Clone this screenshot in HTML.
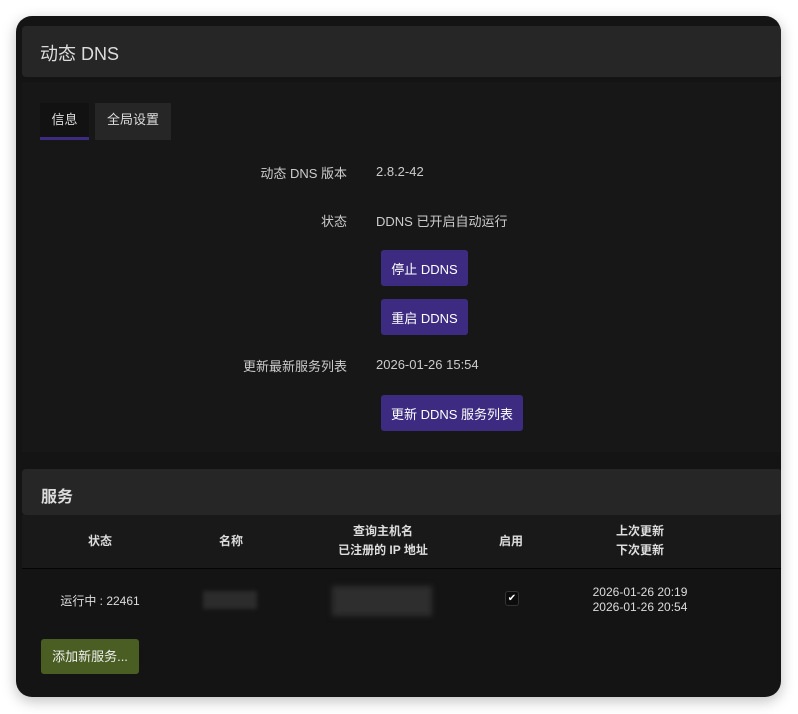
<!DOCTYPE html>
<html><head><meta charset="utf-8"><style>
*{margin:0;padding:0;box-sizing:border-box}
body{width:798px;height:714px;background:#fff;font-family:"Liberation Sans","Noto Sans CJK SC",sans-serif;color:#ddd;position:relative;overflow:hidden}
.win{position:absolute;left:16px;top:16px;width:765px;height:681px;background:#141414;border-radius:16px;overflow:hidden;box-shadow:0 4px 14px rgba(0,0,0,.25)}
.abs{position:absolute}
.hdr{left:6px;top:10px;width:760px;height:51px;background:#262626;border-radius:4px}
.sec{left:6px;top:66px;width:760px;height:370px;background:#171717}
.btn{position:absolute;background:#3d2b82;color:#fff;font-size:13px;border-radius:3px;display:flex;align-items:center;justify-content:center;height:36px}
.lbl{position:absolute;font-size:13px;color:#ccc;text-align:right;width:200px}
.val{position:absolute;font-size:13px;color:#ccc}
.th{position:absolute;font-size:12px;font-weight:bold;color:#ddd;text-align:center;line-height:19px}
.td{position:absolute;font-size:12px;color:#ddd;text-align:center;line-height:15px}
</style></head><body>
<div class="win">
<div class="abs hdr"><div class="abs" style="left:18px;top:14px;font-size:18px;color:#ddd">动态 DNS</div></div>
<div class="abs sec">
<div class="abs" style="left:18px;top:21px;width:49px;height:37px;background:#121212;font-size:13px;text-align:center;line-height:34px">信息<div class="abs" style="left:0;bottom:0;width:49px;height:3px;background:#3d2b82"></div></div>
<div class="abs" style="left:73px;top:21px;width:76px;height:37px;background:#262626;font-size:13px;text-align:center;line-height:34px">全局设置</div>
</div>
<div class="lbl" style="left:131px;top:147px">动态 DNS 版本</div><div class="val" style="left:360px;top:148px">2.8.2-42</div>
<div class="lbl" style="left:131px;top:195px">状态</div><div class="val" style="left:360px;top:195px">DDNS 已开启自动运行</div>
<div class="btn" style="left:365px;top:234px;width:87px">停止 DDNS</div>
<div class="btn" style="left:365px;top:283px;width:87px">重启 DDNS</div>
<div class="lbl" style="left:131px;top:340px">更新最新服务列表</div><div class="val" style="left:360px;top:341px">2026-01-26 15:54</div>
<div class="btn" style="left:365px;top:379px;width:142px">更新 DDNS 服务列表</div>
<div class="abs" style="left:6px;top:453px;width:760px;height:46px;background:#262626;border-radius:4px"><div class="abs" style="left:19px;top:14px;font-size:16px;font-weight:bold">服务</div></div>
<div class="abs" style="left:6px;top:499px;width:760px;height:54px;background:#191919;border-bottom:1px solid #050505"></div>
<div class="th" style="left:44px;top:516px;width:80px">状态</div>
<div class="th" style="left:175px;top:516px;width:80px">名称</div>
<div class="th" style="left:287px;top:506px;width:160px">查询主机名<br>已注册的 IP 地址</div>
<div class="th" style="left:455px;top:516px;width:80px">启用</div>
<div class="th" style="left:564px;top:506px;width:120px">上次更新<br>下次更新</div>
<div class="td" style="left:34px;top:578px;width:100px">运行中 : 22461</div>
<div class="abs" style="left:187px;top:575px;width:54px;height:18px;background:#2c2c2c;filter:blur(2px)"></div>
<div class="abs" style="left:316px;top:570px;width:100px;height:30px;background:#2e2e2e;filter:blur(3px)"></div>
<div class="abs" style="left:489px;top:575px;width:14px;height:15px;background:#0c0c0c;border:1px solid #333;border-radius:3px;color:#fff;font-size:10px;text-align:center;line-height:13px">✔</div>
<div class="td" style="left:544px;top:569px;width:160px">2026-01-26 20:19<br>2026-01-26 20:54</div>
<div class="abs" style="left:25px;top:623px;width:98px;height:35px;background:#4a5e23;border-radius:3px;font-size:13px;color:#eee;text-align:center;line-height:35px">添加新服务...</div>
</div>
</body></html>
